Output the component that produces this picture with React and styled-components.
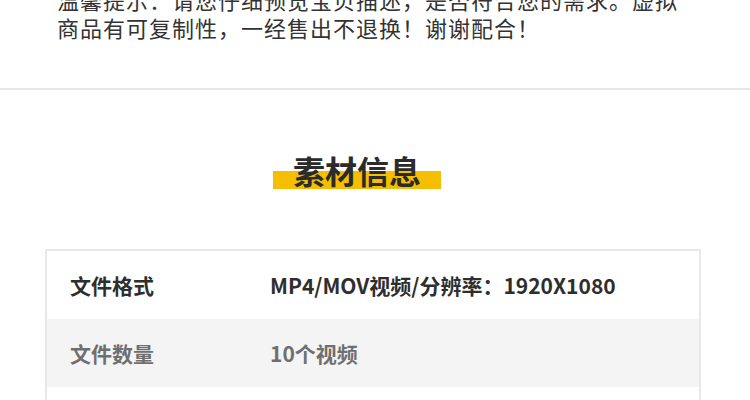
import React from 'react';
import styled, { createGlobalStyle } from 'styled-components';

const GlobalStyle = createGlobalStyle`
  html, body {
    margin: 0;
    padding: 0;
    background: #ffffff;
    overflow: hidden;
  }
  body {
    font-family: "Noto Sans CJK SC", "Noto Sans", sans-serif;
  }
`;

const Page = styled.div`
  width: 750px;
  height: 400px;
  overflow: hidden;
  display: flex;
  flex-direction: column;
`;

const Notice = styled.p`
  margin: -15px 0 0 0;
  padding: 0 57px;
  font-size: 22px;
  letter-spacing: 1px;
  line-height: 28px;
  color: #333333;
  font-weight: 400;
`;

const Divider = styled.div`
  margin-top: 47px;
  height: 2px;
  background: #e6e6e6;
  flex-shrink: 0;
`;

const TitleRow = styled.div`
  margin-top: 60px;
  display: flex;
  justify-content: center;
  padding-right: 36px;
`;

const Title = styled.h2`
  margin: 0;
  padding: 0 20px;
  height: 40px;
  font-size: 32px;
  line-height: 40px;
  font-weight: 700;
  color: #2b2b2b;
  background: linear-gradient(
    to bottom,
    transparent 21px,
    #f5be00 21px,
    #f5be00 39px,
    transparent 39px
  );
`;

const Table = styled.div`
  margin: 59px 0 0 45px;
  width: 652px;
  border: 2px solid #e8e8e8;
  display: flex;
  flex-direction: column;
  flex-shrink: 0;
`;

const Row = styled.div`
  height: 68px;
  display: flex;
  align-items: center;
  padding-left: 23px;
  background: ${props => (props.striped ? '#f4f4f4' : '#ffffff')};
  color: ${props => (props.striped ? '#6f6f6f' : '#2e2e2e')};
  font-size: 21px;
  font-weight: 700;
`;

const Label = styled.span`
  width: 200px;
  flex-shrink: 0;
`;

const Value = styled.span`
  flex: 1;
`;

const rows = [
  { label: '文件格式', value: 'MP4/MOV视频/分辨率：1920X1080' },
  { label: '文件数量', value: '10个视频' },
  { label: '文件大小', value: '' },
];

function App() {
  return (
    <React.Fragment>
      <GlobalStyle />
      <Page>
        <Notice>
          温馨提示：请您仔细预览宝贝描述，是否符合您的需求。虚拟商品有可复制性，一经售出不退换！谢谢配合！
        </Notice>
        <Divider />
        <TitleRow>
          <Title>素材信息</Title>
        </TitleRow>
        <Table>
          {rows.map((row, index) => (
            <Row key={row.label} striped={index % 2 === 1}>
              <Label>{index < 2 ? row.label : ''}</Label>
              <Value>{row.value}</Value>
            </Row>
          ))}
        </Table>
      </Page>
    </React.Fragment>
  );
}

export default App;
